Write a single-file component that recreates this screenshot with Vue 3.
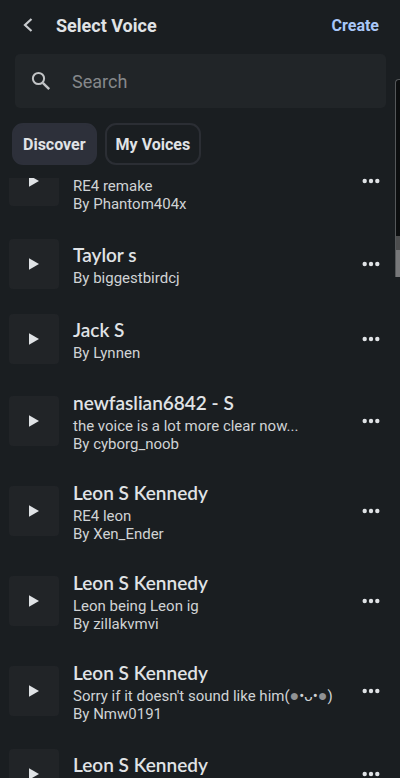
<script setup>
import { onMounted, ref } from 'vue'

const voices = [
  { name: 'Leon S Kennedy', note: 'RE4 remake', author: 'Phantom404x' },
  { name: 'Taylor s', author: 'biggestbirdcj' },
  { name: 'Jack S', author: 'Lynnen' },
  { name: 'newfaslian6842 - S', note: 'the voice is a lot more clear now...', author: 'cyborg_noob' },
  { name: 'Leon S Kennedy', note: 'RE4 leon', author: 'Xen_Ender' },
  { name: 'Leon S Kennedy', note: 'Leon being Leon ig', author: 'zillakvmvi' },
  { name: 'Leon S Kennedy', note: "Sorry if it doesn't sound like him", face: true, author: 'Nmw0191' },
  { name: 'Leon S Kennedy', author: '' },
]

const list = ref(null)
const query = ref('')
const tab = ref('Discover')

onMounted(() => {
  list.value.scrollTop = 42
})
</script>

<template>
  <div class="screen">
    <header class="bar">
      <button class="back" aria-label="Back">
        <svg width="12" height="16" viewBox="0 0 12 16" fill="none">
          <path d="M9.5 2 3 8l6.5 6" stroke="currentColor" stroke-width="2.2" />
        </svg>
      </button>
      <h1>Select Voice</h1>
      <button class="create">Create</button>
    </header>

    <label class="search">
      <svg width="20" height="20" viewBox="0 0 20 20" fill="none" stroke="currentColor">
        <circle cx="7.5" cy="7.5" r="5.6" stroke-width="2" />
        <path d="m11.8 11.8 6.4 6.4" stroke-width="2.4" />
      </svg>
      <input v-model="query" type="text" placeholder="Search" aria-label="Search" />
    </label>

    <nav class="tabs">
      <button
        v-for="t in ['Discover', 'My Voices']"
        :key="t"
        class="tab"
        :class="{ active: tab === t }"
        @click="tab = t"
      >{{ t }}</button>
    </nav>

    <ul ref="list" class="list">
      <li v-for="(v, i) in voices" :key="i" class="row">
        <button class="play" aria-label="Play">
          <svg width="10" height="12" viewBox="0 0 10 12"><path d="M0 0.3 10 6 0 11.7z" fill="currentColor" /></svg>
        </button>
        <div class="text">
          <h2>{{ v.name }}</h2>
          <p v-if="v.note">{{ v.note }}<template v-if="v.face">(<span class="cheek">●</span>•ᴗ•<span class="cheek">●</span>)</template></p>
          <p>By {{ v.author }}</p>
        </div>
        <button class="more" aria-label="More">
          <svg width="18" height="6" viewBox="0 0 18 6" fill="currentColor">
            <circle cx="2.7" cy="3" r="2.2" /><circle cx="9" cy="3" r="2.2" /><circle cx="15.3" cy="3" r="2.2" />
          </svg>
        </button>
      </li>
    </ul>

    <div class="edge"><div class="edge-foot"></div></div>
  </div>
</template>

<style>
body {
  background: #1a1e21;
}
</style>

<style scoped>
.screen {
  position: relative;
  display: flex;
  flex-direction: column;
  height: 100vh;
  overflow: hidden;
  background: #1a1e21;
  color: #e0e3e6;
  font-family: Roboto, "Liberation Sans", sans-serif;
}
button {
  padding: 0;
  border: 0;
  background: none;
  color: inherit;
  font: inherit;
}
.bar {
  display: flex;
  align-items: center;
  height: 50px;
  padding: 0 21px 0 22px;
}
.back {
  display: flex;
  width: 34px;
  color: #c8cbce;
}
h1 {
  flex: 1;
  margin: 0;
  font-size: 18px;
  font-weight: 700;
}
.create {
  color: #a9c7f8;
  font-size: 16px;
  font-weight: 700;
}
.search {
  display: flex;
  align-items: center;
  gap: 21px;
  height: 54px;
  margin: 4px 14px 0 15px;
  padding: 0 16px;
  border-radius: 5px;
  background: #212528;
  color: #c2c4c6;
}
.search input {
  flex: 1;
  min-width: 0;
  padding: 0;
  border: 0;
  outline: 0;
  background: none;
  color: inherit;
  font: 18px Roboto, sans-serif;
}
.search input::placeholder {
  color: #85888b;
  opacity: 1;
}
.tabs {
  display: flex;
  gap: 8px;
  padding: 15px 12px 13px;
}
.tab {
  height: 42px;
  padding: 0 9px;
  border: 2px solid #2b2e34;
  border-radius: 11px;
  font-size: 16px;
  font-weight: 700;
}
.tab.active {
  border-color: #2d303a;
  background: #2d303a;
}
.list {
  flex: 1;
  min-height: 0;
  margin: 0;
  padding: 0;
  overflow-y: auto;
  list-style: none;
  scrollbar-width: none;
}
.row {
  display: flex;
  align-items: center;
  min-height: 75px;
  padding: 0 20px 0 9px;
}
.play {
  display: flex;
  flex: none;
  align-items: center;
  justify-content: center;
  width: 50px;
  height: 50px;
  border-radius: 4px;
  background: #212427;
}
.text {
  flex: 1;
  min-width: 0;
  padding: 13px 0 13px 14px;
}
h2 {
  margin: 0;
  font-family: Lato, sans-serif;
  font-size: 19px;
  font-weight: 600;
  line-height: 28px;
}
p {
  margin: 0;
  color: #d0d3d5;
  font-size: 15px;
  line-height: 18px;
  white-space: nowrap;
}
.cheek {
  color: #909294;
  font-size: 16px;
  line-height: 1;
}
.more {
  display: flex;
  flex: none;
}
.edge {
  position: absolute;
  top: 79px;
  right: 0;
  display: flex;
  align-items: flex-end;
  width: 5px;
  height: 198px;
  box-sizing: border-box;
  border-top: 1px solid #55585a;
  border-left: 1px solid #55585a;
  border-top-left-radius: 4px;
  background: #0c0e0f;
}
.edge-foot {
  width: 100%;
  height: 41px;
  box-sizing: border-box;
  border-top: 14px solid #4c4d4e;
  background: #77787a;
}
</style>
